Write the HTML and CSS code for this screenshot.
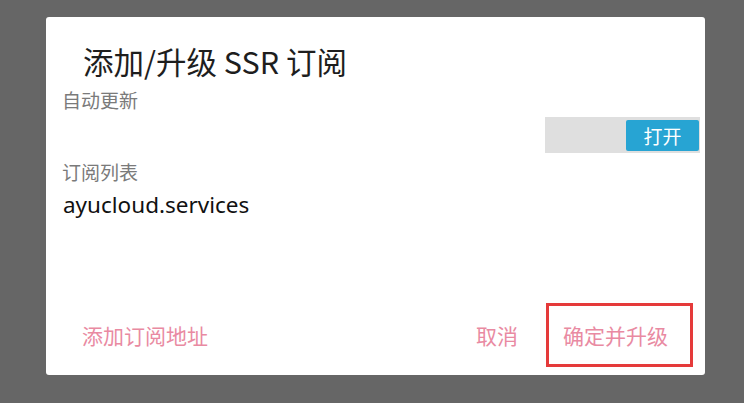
FILE: index.html
```html
<!DOCTYPE html>
<html lang="zh-CN">
<head>
<meta charset="utf-8">
<link rel="stylesheet" href="styles.css">
</head>
<body>
<div class="dialog">
  <div class="title">添加/升级 SSR 订阅</div>
  <div class="label">自动更新</div>
  <div class="toggle-row">
    <div class="toggle">
      <span class="toggle-on">打开</span>
    </div>
  </div>
  <div class="label label-list">订阅列表</div>
  <div class="value">ayucloud.services</div>
  <div class="spacer"></div>
  <div class="actions">
    <span class="btn btn-add">添加订阅地址</span>
    <span class="btn btn-cancel">取消</span>
    <span class="btn btn-ok">确定并升级</span>
  </div>
</div>
</body>
</html>
```
FILE: styles.css
```css
html, body {
  margin: 0;
  padding: 0;
  background: #666666;
  width: 744px;
  height: 403px;
  overflow: hidden;
}
body {
  font-family: "Noto Sans CJK SC", "Noto Sans", sans-serif;
  padding: 17px 0 0 46px;
  box-sizing: border-box;
}
.dialog {
  width: 659px;
  height: 358px;
  background: #ffffff;
  border-radius: 3px;
  display: flex;
  flex-direction: column;
  box-sizing: border-box;
}
.title {
  margin-top: 26px;
  padding-left: 37px;
  font-size: 30.5px;
  line-height: 36px;
  color: #1e1e1e;
  height: 36px;
}
.label {
  padding-left: 16px;
  font-size: 19px;
  line-height: 22px;
  color: #7a7a7a;
  margin-top: 10px;
}
.toggle-row {
  display: flex;
  justify-content: flex-end;
  padding-right: 5px;
  margin-top: 6px;
}
.toggle {
  width: 155px;
  height: 36px;
  background: #dfdfdf;
  display: flex;
  justify-content: flex-end;
  align-items: center;
  padding-right: 1px;
  box-sizing: border-box;
}
.toggle-on {
  width: 73px;
  height: 31px;
  background: #27a4d3;
  border-radius: 2px;
  color: #ffffff;
  font-size: 19px;
  line-height: 31px;
  text-align: center;
}
.label-list {
  margin-top: 8px;
}
.value {
  padding-left: 17px;
  font-family: "Noto Sans", "Noto Sans CJK SC", sans-serif;
  font-size: 22.5px;
  line-height: 30px;
  color: #111111;
  margin-top: 7px;
}
.spacer {
  flex: 1;
}
.actions {
  display: flex;
  align-items: center;
  height: 64px;
  margin-bottom: 8px;
  padding-right: 12px;
}
.btn {
  font-size: 21px;
  line-height: 30px;
  color: #e98aa2;
}
.btn-add {
  margin-left: 36px;
  margin-right: auto;
}
.btn-cancel {
  margin-right: 28px;
}
.btn-ok {
  display: flex;
  align-items: center;
  height: 64px;
  box-sizing: border-box;
  border: 3px solid #e53a3a;
  padding: 0 22px 0 14px;
}
```
